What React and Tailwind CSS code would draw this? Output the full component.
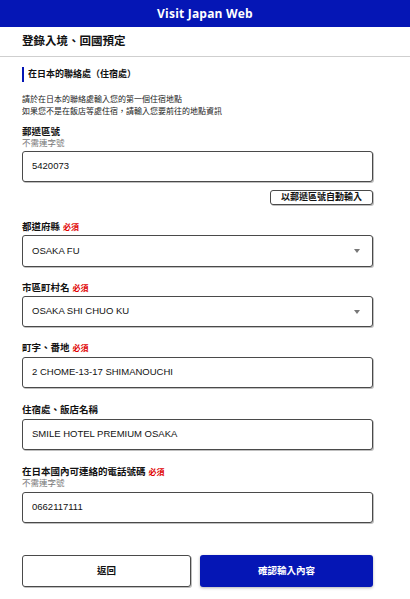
import React from "react";

const font = { fontFamily: '"Liberation Sans", "Noto Sans CJK TC", sans-serif' };

const Required = () => (
  <span className="ml-[3px] text-[8px] font-bold text-[#e00000]">必須</span>
);

const Label = ({ text, required, hint, className = "" }) => (
  <div className={className}>
    <div className="h-[12px] text-[9.5px] leading-[12px] font-bold text-[#111]">
      {text}
      {required && <Required />}
    </div>
    {hint && (
      <div className="h-[11px] text-[8.5px] leading-[11px] text-[#777]">{hint}</div>
    )}
  </div>
);

const Box = ({ value, select, height = "h-[31px]", className = "" }) => (
  <div
    className={`flex items-center justify-between rounded-[3px] border border-[#4a4a4a] bg-white pl-[9px] pr-[12px] shadow-[1px_1px_0_rgba(0,0,0,0.25)] ${height} ${className}`}
  >
    <span className="text-[9.5px] text-[#111]">{value}</span>
    {select && (
      <span className="h-0 w-0 border-x-[3px] border-t-[4px] border-x-transparent border-t-[#777]" />
    )}
  </div>
);

export default function App() {
  return (
    <div className="min-h-[599px] w-[410px] bg-white" style={font}>
      <div className="flex h-[27px] items-center justify-center bg-[#0516b5]">
        <span
          className="text-[12px] font-bold tracking-[0.2px] text-white"
          style={{ fontFamily: '"Open Sans", sans-serif' }}
        >
          Visit Japan Web
        </span>
      </div>

      <div className="flex h-[30px] items-center border-b border-[#cfcfcf] pl-[22px]">
        <h1 className="text-[11.5px] font-bold text-[#111]">登錄入境、回國預定</h1>
      </div>

      <div className="pl-[22px] pr-[37px]">
        <div className="mt-[10px] flex h-[15px] items-center border-l-2 border-[#0516b5] pl-[4px]">
          <span className="text-[9px] font-bold text-[#111]">在日本的聯絡處（住宿處）</span>
        </div>

        <div className="mt-[12px] text-[8px] leading-[12px] text-[#222]">
          <p>請於在日本的聯絡處輸入您的第一個住宿地點</p>
          <p>如果您不是在飯店等處住宿，請輸入您要前往的地點資訊</p>
        </div>

        <Label className="mt-[8px]" text="郵遞區號" hint="不需連字號" />
        <Box className="mt-[2px]" value="5420073" />

        <div className="mt-[8px] flex justify-end">
          <button className="h-[15px] w-[103px] rounded-[3px] border border-[#4a4a4a] bg-white text-[9px] font-bold leading-none text-[#111] shadow-[1px_1px_0_rgba(0,0,0,0.25)]">
            以郵遞區號自動輸入
          </button>
        </div>

        <Label className="mt-[16px]" text="都道府縣" required />
        <Box className="mt-[2px]" height="h-[32px]" value="OSAKA FU" select />

        <Label className="mt-[15px]" text="市區町村名" required />
        <Box className="mt-[2px]" value="OSAKA SHI CHUO KU" select />

        <Label className="mt-[15px]" text="町字、番地" required />
        <Box className="mt-[3px]" value="2 CHOME-13-17 SHIMANOUCHI" />

        <Label className="mt-[16px]" text="住宿處、飯店名稱" />
        <Box className="mt-[3px]" value="SMILE HOTEL PREMIUM OSAKA" />

        <Label className="mt-[16px]" text="在日本國內可連絡的電話號碼" required hint="不需連字號" />
        <Box className="mt-[3px]" value="0662117111" />

        <div className="mt-[32px] grid grid-cols-[169px_1fr] gap-[9px]">
          <button className="h-[32px] rounded-[3px] border border-[#4a4a4a] bg-white text-[9.5px] font-bold text-[#111] shadow-[1px_1px_0_rgba(0,0,0,0.25)]">
            返回
          </button>
          <button className="h-[32px] rounded-[3px] bg-[#0516b5] text-[9.5px] font-bold text-white shadow-[0_1px_3px_rgba(0,0,0,0.3)]">
            確認輸入內容
          </button>
        </div>
      </div>
    </div>
  );
}
